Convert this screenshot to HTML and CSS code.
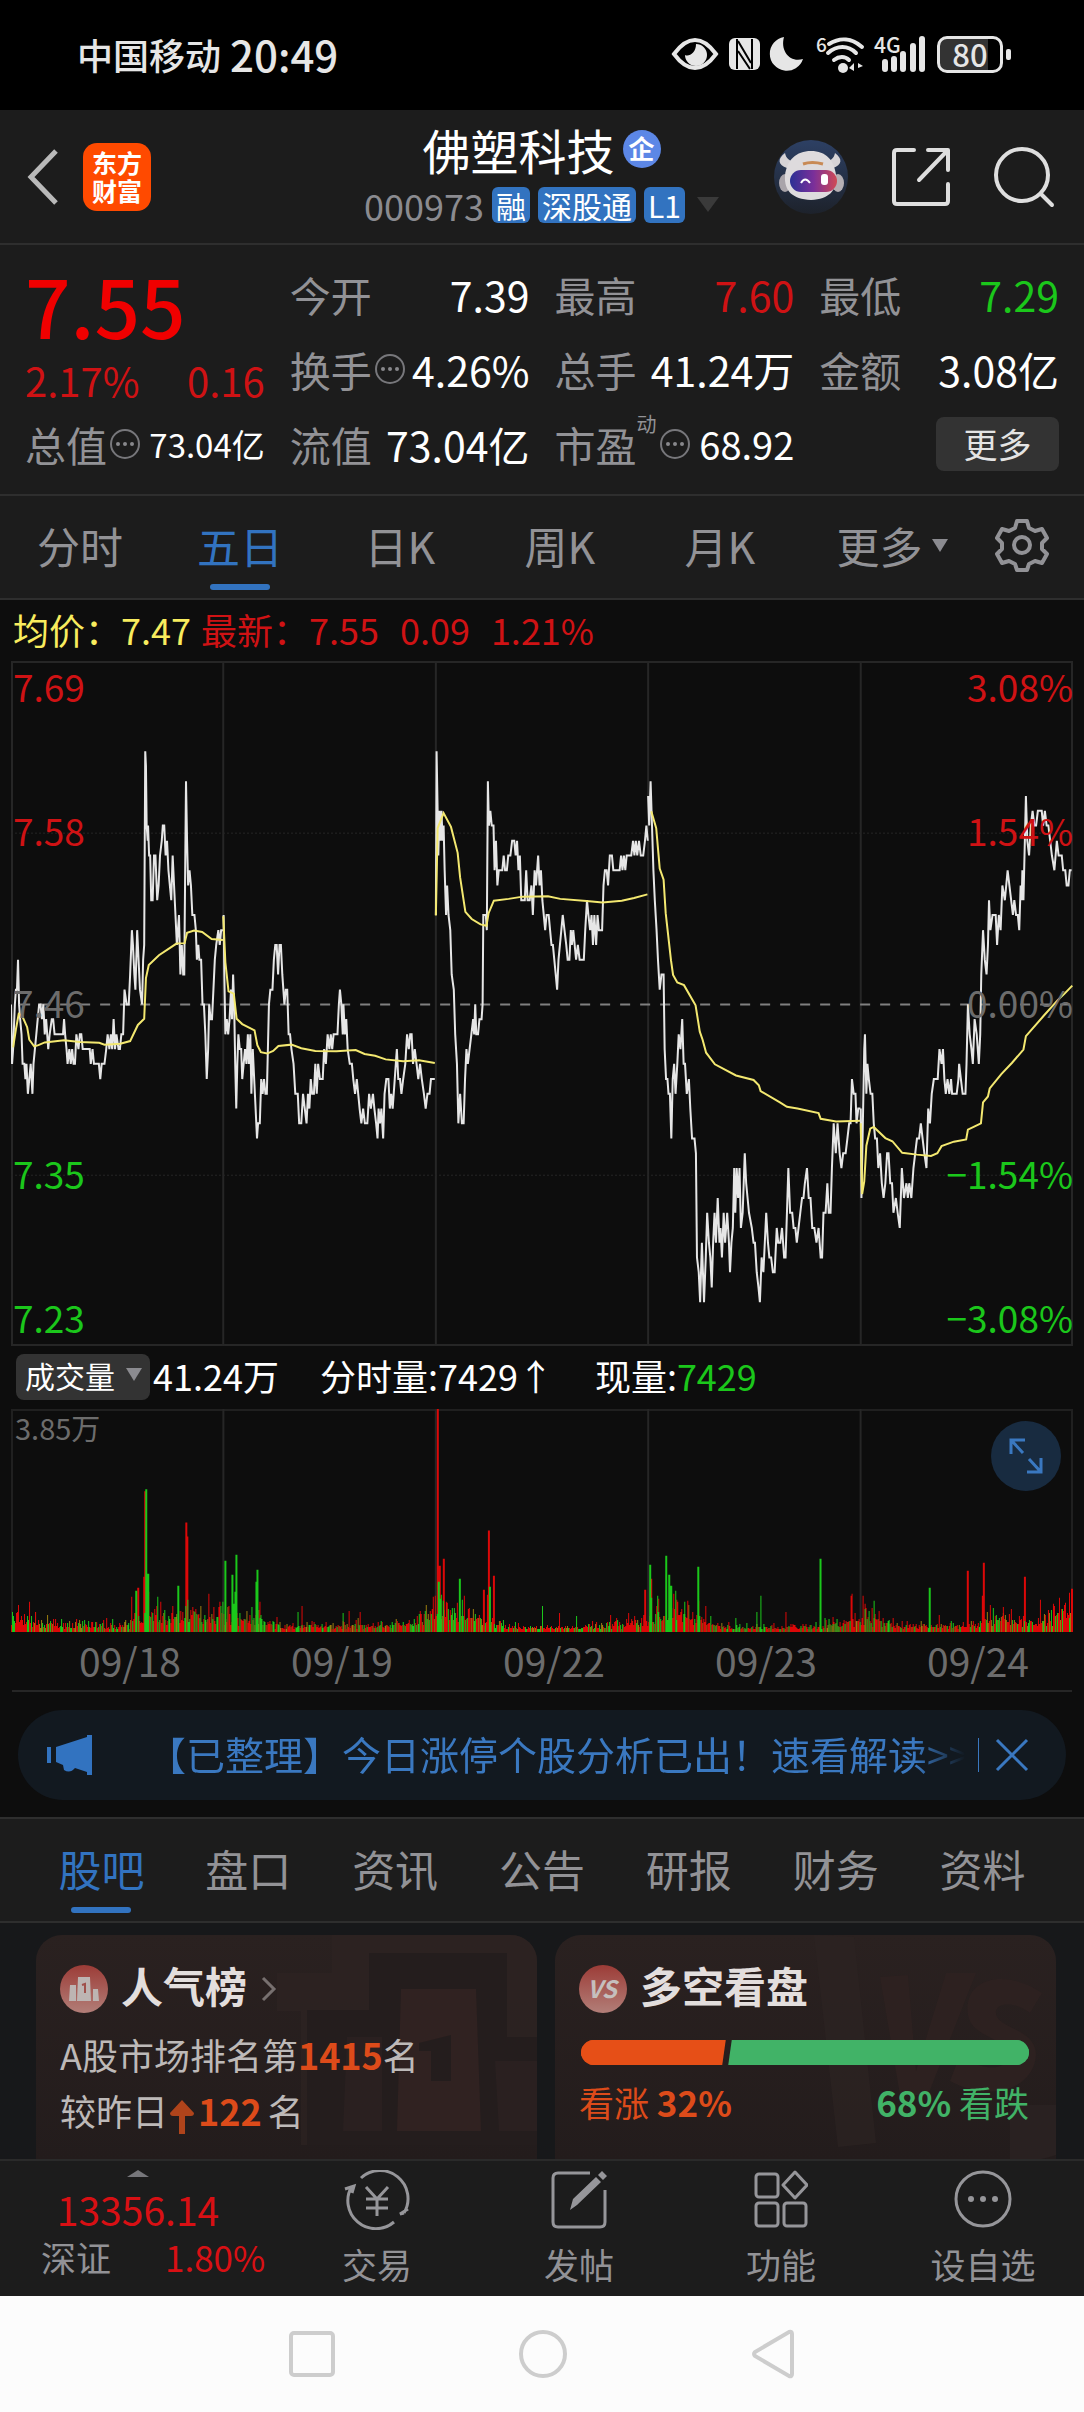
FILE: index.html
```html
<!DOCTYPE html>
<html lang="zh-CN">
<head>
<meta charset="utf-8">
<meta name="viewport" content="width=device-width, initial-scale=1">
<title>佛塑科技 000973</title>
<link rel="stylesheet" href="styles.css">
</head>
<body>
<div class="status-bar">
  <div class="carrier"><span>中国移动</span><span class="clock">20:49</span></div>
  <div class="status-icons">
    <svg width="46" height="34" viewBox="0 0 46 34"><path d="M2 17C10 6 17 3 23 3s13 3 21 14C36 28 29 31 23 31S10 28 2 17Z" fill="none" stroke="#e6e6e6" stroke-width="4"/><path d="M24 7a11 11 0 1 1-11 11c4 2 11-2 11-11Z" fill="#e6e6e6"/></svg>
    <svg width="31" height="34" viewBox="0 0 31 34"><rect y="1" width="31" height="32" rx="6" fill="#e6e6e6"/><path d="M8 2v30M23 2v30M9 4l13 22M9 14l12 18" stroke="#000" stroke-width="2"/></svg>
    <svg width="33" height="34" viewBox="0 0 33 34"><path d="M13 0a17 17 0 1 0 19 22C19 26 9 14 13 0Z" fill="#e6e6e6"/></svg>
    <svg class="wifi" width="50" height="38" viewBox="0 0 50 38"><g fill="none" stroke="#e6e6e6" stroke-width="4" stroke-linecap="round"><path d="M14 9c11-7 23-6 33 3M13 18c9-8 20-8 28 0M19 25c5-4 11-4 15 0"/></g><circle cx="28" cy="33" r="5" fill="#e6e6e6"/><path d="M39 28v8l-5-3ZM43 28v8M43 28l5 3-5 2Z" fill="#e6e6e6"/><text x="1" y="17" font-size="19" fill="#e6e6e6">6</text></svg>
    <svg width="52" height="38" viewBox="0 0 52 38"><text x="0" y="18" font-size="21" fill="#e6e6e6">4G</text><path d="M11 27v7M20 24v10M29 19v15M39 11v23M48 4v30" stroke="#e6e6e6" stroke-width="6" stroke-linecap="round"/></svg>
    <div class="battery">80</div>
  </div>
</div>

<header class="header">
  <div class="header-left">
    <button class="icon-btn" aria-label="返回"><svg width="34" height="58" viewBox="0 0 34 58"><path d="M30 3 5 29l25 26" fill="none" stroke="#b9b9b9" stroke-width="5"/></svg></button>
    <a class="logo" href="#">东方<br>财富</a>
  </div>
  <div class="header-mid">
    <h1 class="stock-name">佛塑科技<span class="corp">企</span></h1>
    <div class="stock-code"><span>000973</span><span class="tag">融</span><span class="tag">深股通</span><span class="tag">L1</span><i class="caret"></i></div>
  </div>
  <div class="header-right">
    <button class="icon-btn" aria-label="助手"><svg width="76" height="76" viewBox="0 0 76 76">
      <defs><linearGradient id="sky" x2="0" y2="1"><stop stop-color="#2d4064"/><stop offset="1" stop-color="#1d222b"/></linearGradient><linearGradient id="visor"><stop stop-color="#2b3095"/><stop offset=".5" stop-color="#7a2f9a"/><stop offset="1" stop-color="#d04a55"/></linearGradient></defs>
      <circle cx="38" cy="38" r="37" fill="url(#sky)"/>
      <path d="M12 14c-8 6-7 12 2 15l8-6c-6-1-9-4-10-9ZM62 14c8 6 7 12-2 15l-8-6c6-1 9-4 10-9Z" fill="#d6d3d6"/>
      <ellipse cx="12" cy="44" rx="6" ry="9" fill="#a9a4aa"/><ellipse cx="65" cy="44" rx="6" ry="9" fill="#b6b0b4"/>
      <path d="M38 12c15 0 23 9 25 24 1 16-7 24-25 25-19-1-27-9-26-25C14 21 23 12 38 12Z" fill="#dedbdd"/>
      <rect x="17" y="31" width="47" height="22" rx="11" fill="url(#visor)"/>
      <path d="M30 25q9-3 20 0" fill="none" stroke="#c88a55" stroke-width="3"/><path d="M28 44q4-7 9 0" fill="none" stroke="#fff" stroke-width="2"/><rect x="48" y="35" width="7" height="11" rx="3" fill="#fff"/>
    </svg></button>
    <button class="icon-btn" aria-label="分享"><svg width="60" height="60" viewBox="0 0 60 60"><g fill="none" stroke="#dedede" stroke-width="4" stroke-linecap="round" stroke-linejoin="round"><path d="M23 3H6q-3 0-3 3v48q0 3 3 3h48q3 0 3-3V37"/><path d="M37 3h20v20M56 4 28 33"/></g></svg></button>
    <button class="icon-btn" aria-label="搜索"><svg width="62" height="62" viewBox="0 0 62 62"><g fill="none" stroke="#dedede" stroke-width="4" stroke-linecap="round"><circle cx="29" cy="29" r="26"/><path d="m48 48 11 11"/></g></svg></button>
  </div>
</header>

<section class="quote">
  <div class="price-box">
    <div class="price">7.55</div>
    <div class="change"><span>2.17%</span><span>0.16</span></div>
  </div>
  <div class="cell"><span>今开</span><b>7.39</b></div>
  <div class="cell"><span>最高</span><b class="up">7.60</b></div>
  <div class="cell"><span>最低</span><b class="down">7.29</b></div>
  <div class="cell"><span>换手</span><svg class="info" viewBox="0 0 32 32"><use href="#dots"/></svg><b>4.26%</b></div>
  <div class="cell"><span>总手</span><b>41.24万</b></div>
  <div class="cell"><span>金额</span><b>3.08亿</b></div>
  <div class="cell"><span>总值</span><svg class="info" viewBox="0 0 32 32"><use href="#dots"/></svg><b class="small">73.04亿</b></div>
  <div class="cell"><span>流值</span><b>73.04亿</b></div>
  <div class="cell"><span>市盈</span><sup>动</sup><svg class="info" viewBox="0 0 32 32"><use href="#dots"/></svg><b class="medium">68.92</b></div>
  <div class="cell"><button class="more-btn">更多</button></div>
</section>
<svg class="defs" width="0" height="0"><g id="dots"><circle cx="16" cy="16" r="14" fill="none" stroke="#77777b" stroke-width="2"/><circle cx="9" cy="16" r="2" fill="#88888c"/><circle cx="16" cy="16" r="2" fill="#88888c"/><circle cx="23" cy="16" r="2" fill="#88888c"/></g></svg>

<nav class="tabs period">
  <button>分时</button><button class="on">五日</button><button>日K</button><button>周K</button><button>月K</button><button class="more-tab">更多<i class="caret"></i></button>
  <button aria-label="设置"><svg width="54" height="54" viewBox="0 0 54 54"><g fill="none" stroke="#929296" stroke-width="4" stroke-linejoin="round"><path d="M22 3h10l2 7 6 3 7-2 5 9-5 5v6l5 5-5 9-7-2-6 3-2 6H22l-2-6-6-3-7 2-5-9 5-5v-6l-5-5 5-9 7 2 6-3Z"/><circle cx="27" cy="27" r="8"/></g></svg></button>
</nav>

<main class="charts">
  <div class="legend"><span class="avg">均价：</span><span class="avg val">7.47</span><span>最新：</span><span class="val">7.55</span><span class="val">0.09</span><span>1.21%</span></div>
  <div class="price-chart">
    <svg class="plot" viewBox="34 26 3022 1532" preserveAspectRatio="none">
      <path class="grid" d="M638 26V1558M1243 26V1558M1847 26V1558M2452 26V1558"/>
      <path class="grid dot" d="M34 411H3056M34 1176H3056"/>
      <path class="zero" d="M60 794H3056"/>
      <g id="price-lines"></g>
    </svg>
    <span class="lab l p1 up">7.69</span><span class="lab l p2 up">7.58</span><span class="lab l p3">7.46</span><span class="lab l p4 down">7.35</span><span class="lab l p5 down">7.23</span>
    <span class="lab r p1 up">3.08%</span><span class="lab r p2 up">1.54%</span><span class="lab r p3">0.00%</span><span class="lab r p4 down">−1.54%</span><span class="lab r p5 down">−3.08%</span>
  </div>
  <div class="vol-head"><button class="vol-btn">成交量<i class="caret"></i></button><span>41.24万</span><span class="vol-min">分时量:7429↑</span><span>现量:<em class="down">7429</em></span></div>
  <div class="vol-chart">
    <svg class="plot" viewBox="0 0 1060 222" preserveAspectRatio="none">
      <path class="grid" d="M212 0V222M424 0V222M636 0V222M848 0V222"/>
      <g id="vol-bars"></g>
    </svg>
    <span class="vol-max">3.85万</span>
    <button class="expand" aria-label="全屏"><svg width="34" height="36" viewBox="0 0 34 36"><path d="M2 16V2h14M3 3l11 12M32 20v14H18M31 33 20 21" fill="none" stroke="#3a78c0" stroke-width="3"/></svg></button>
  </div>
  <div class="dates"><span>09/18</span><span>09/19</span><span>09/22</span><span>09/23</span><span>09/24</span></div>
  <div class="banner">
    <svg width="46" height="40" viewBox="0 0 46 40"><path d="M0 12h4v16H0ZM9 12 40 2V0h5v40h-5v-3l-12-4q-5 6-11 2l-1-5-7-3Z" fill="#3273c0"/></svg>
    <a class="banner-text" href="#">【已整理】今日涨停个股分析已出！速看解读&gt;&gt;</a>
    <button class="close" aria-label="关闭"><svg width="34" height="34" viewBox="0 0 34 34"><path d="m2 2 30 30M32 2 2 32" stroke="#3a78c0" stroke-width="3"/></svg></button>
  </div>
</main>

<nav class="tabs topic">
  <button class="on">股吧</button><button>盘口</button><button>资讯</button><button>公告</button><button>研报</button><button>财务</button><button>资料</button>
</nav>

<section class="cards">
  <article class="card">
    <svg class="mark" width="260" height="210" viewBox="0 0 260 210"><path d="M55 0h205v210H24V76H0V38h55Z" fill="#2d2422" opacity=".7"/><path d="M92 18h138v84h30v108H30V75h62Z" fill="#241d1d"/><path d="M124 54h75l5 142h-84Z" fill="#302221"/><path d="M70 102h35v94H66Z" fill="#2a2020"/><path d="M218 126h42v70h-38Z" fill="#2a2020"/><path d="m142 108 32-8v46h-20v-30h-12Z" fill="#241d1d"/></svg>
    <h2><svg width="48" height="48" viewBox="0 0 48 48"><defs><linearGradient id="red" x2="0" y2="1"><stop stop-color="#9c3c37"/><stop offset="1" stop-color="#b27e78"/></linearGradient></defs><circle cx="24" cy="24" r="24" fill="url(#red)"/><path d="M10 20h6v16H9ZM18 12h12l1 24H17ZM33 24h5l1 12h-6Z" fill="#bdb5b3"/><path d="m22 20 3-1v9" fill="none" stroke="#a0504b" stroke-width="2"/></svg><span>人气榜</span><svg class="chev" width="16" height="26" viewBox="0 0 16 26"><path d="m2 2 11 11L2 24" fill="none" stroke="#77706f" stroke-width="3"/></svg></h2>
    <p>A股市场排名第<b>1415</b>名</p>
    <p>较昨日<svg class="arrow" width="24" height="34" viewBox="0 0 24 34"><path d="M12 0 24 13q0 3-3 3h-6v18H9V16H3q-3 0-3-3Z" fill="#b0441b"/></svg><b class="gain">122</b>名</p>
  </article>
  <article class="card">
    <svg class="mark" width="242" height="226" viewBox="0 0 242 226"><path d="m0 0 40 2 22 206-38 4Z" fill="#2c2322" opacity=".7"/><path d="m66 42 28-2 8 96 30-98h30L114 160H86Z" fill="#2d2120"/><path d="M228 58c-38-26-80-14-74 22 4 24 42 22 40 42-2 16-32 12-48-2l-10 26c40 22 84 8 86-26 0-28-42-26-40-44 2-10 22-8 34 2Z" fill="#2d2120"/><path d="M196 170h46v50q-22 8-46 4Z" fill="#292121"/></svg>
    <h2><svg width="48" height="48" viewBox="0 0 48 48"><circle cx="24" cy="24" r="24" fill="url(#red)"/><text x="23" y="33" text-anchor="middle" font-size="24" font-weight="700" font-style="italic" fill="#c5bfbd">VS</text></svg><span>多空看盘</span></h2>
    <div class="ratio"><i class="bull" style="width:32%"></i><i class="bear"></i></div>
    <div class="ratio-text"><span>看涨 <b>32%</b></span><span class="fall"><b>68%</b> 看跌</span></div>
  </article>
</section>

<footer class="toolbar">
  <a class="index" href="#"><i class="caret"></i><strong>13356.14</strong><span><em>深证</em>1.80%</span></a>
  <a href="#"><svg width="66" height="60" viewBox="0 0 66 60"><g fill="none" stroke="#96969a" stroke-width="3"><path d="M17 8a28 28 0 0 1 43 35M60 43l-4 1 8-5M50 52A28 28 0 0 1 8 16M1 19l9-3-2 7"/><path d="m22 17 11 12 11-12M33 29v17M22 29h22M22 38h22"/></g></svg>交易</a>
  <a href="#"><svg width="58" height="60" viewBox="0 0 58 60"><g fill="none" stroke="#96969a" stroke-width="3"><path d="M40 3H8Q3 3 3 8v44q0 5 5 5h42q5 0 5-5V20"/></g><path d="m20 40 3-11L46 7l5 5-24 23ZM48 5l4-4 5 5-4 4Z" fill="#96969a"/></svg>发帖</a>
  <a href="#"><svg width="54" height="58" viewBox="0 0 54 58"><g fill="none" stroke="#96969a" stroke-width="3"><rect x="2" y="4" width="22" height="23" rx="3"/><rect x="2" y="33" width="22" height="23" rx="3"/><rect x="30" y="33" width="22" height="23" rx="3"/><path d="m41 2 12 13-12 13-12-13Z" stroke-linejoin="round"/></g></svg>功能</a>
  <a href="#"><svg width="58" height="58" viewBox="0 0 58 58"><circle cx="29" cy="29" r="27" fill="none" stroke="#96969a" stroke-width="3"/><g fill="#96969a"><circle cx="17" cy="29" r="3"/><circle cx="29" cy="29" r="3"/><circle cx="41" cy="29" r="3"/></g></svg>设自选</a>
</footer>

<div class="sys-nav">
  <button aria-label="最近任务"><svg width="46" height="46" viewBox="0 0 46 46"><rect x="2" y="2" width="42" height="42" rx="3"/></svg></button>
  <button aria-label="主页"><svg width="50" height="50" viewBox="0 0 50 50"><circle cx="25" cy="25" r="22"/></svg></button>
  <button aria-label="后退"><svg width="44" height="50" viewBox="0 0 44 50"><path d="M38 3q3-1 3 2v40q0 3-3 2L4 27q-2-2 0-4Z"/></svg></button>
</div>
<script src="chart.js"></script>
</body>
</html>
```
FILE: styles.css
```css
* { box-sizing: border-box; }
body {
  margin: 0;
  min-height: 100vh;
  display: flex;
  flex-direction: column;
  background: #17181a;
  color: #fff;
  font-family: "Noto Sans CJK SC", "Noto Sans", sans-serif;
  font-size: 36px;
  line-height: 48px;
}
button { font: inherit; color: inherit; background: none; border: 0; padding: 0; }
a { color: inherit; text-decoration: none; }
svg { display: block; flex: none; }
h1, h2, p { margin: 0; }
em, i { font-style: normal; }
.up { color: #cf1214; }
.down { color: #1bc71b; }
.defs { position: absolute; }
.caret {
  display: inline-block;
  border: 8px solid transparent;
  border-top: 13px solid #8b8b90;
  border-bottom: 0;
}

.status-bar {
  height: 110px;
  padding: 0 81px 2px 77px;
  display: flex;
  align-items: center;
  justify-content: space-between;
  background: #000;
  color: #e6e6e6;
}
.carrier { display: flex; align-items: center; gap: 9px; font-weight: 500; }
.clock { font-size: 42px; }
.status-icons { display: flex; align-items: center; gap: 11px; font-weight: 500; }
.status-icons svg { overflow: visible; }
.wifi { margin-right: -2px; }
.battery {
  position: relative;
  width: 66px;
  height: 37px;
  border: 3px solid #e6e6e6;
  border-radius: 10px;
  background: linear-gradient(90deg, #333 80%, #000 80%);
  text-align: center;
  font-size: 31px;
  line-height: 29px;
}
.battery::after {
  content: "";
  position: absolute;
  right: -11px;
  top: 10px;
  width: 5px;
  height: 11px;
  border-radius: 2px;
  background: #e6e6e6;
}

.header {
  height: 135px;
  padding: 0 29px 0 26px;
  display: grid;
  grid-template-columns: 1fr auto 1fr;
  align-items: center;
  background: #1c1c1c;
  border-bottom: 2px solid #2e2e2e;
}
.icon-btn { display: block; }
.header-left { display: flex; align-items: center; gap: 23px; }
.logo {
  width: 68px;
  height: 68px;
  padding: 5px 0;
  border-radius: 14px;
  background: #ff4a00;
  text-align: center;
  font-size: 25px;
  font-weight: 700;
  line-height: 28px;
}
.stock-name { display: flex; align-items: center; justify-content: center; gap: 8px; font-size: 48px; line-height: 60px; font-weight: 400; }
.corp { width: 38px; height: 38px; border-radius: 50%; background: #5c87e6; font-size: 26px; line-height: 36px; font-weight: 700; text-align: center; }
.header-mid { padding-left: 2px; padding-bottom: 4px; }
.stock-code { display: flex; align-items: center; justify-content: center; gap: 8px; height: 52px; color: #8b8b90; }
.tag { padding: 0 4px; border-radius: 6px; background: #3273c0; color: #fff; font-size: 30px; line-height: 36px; }
.stock-code .caret { margin-left: 4px; border-width: 15px 11px 0; border-top-color: #3a3a3a; }
.header-right { display: flex; align-items: center; justify-content: flex-end; gap: 42px; }

.quote {
  padding: 11px 25px 13px;
  display: grid;
  grid-template-columns: repeat(4, minmax(0, 1fr));
  grid-auto-rows: 75px;
  column-gap: 25px;
  background: #1c1c1c;
  border-bottom: 2px solid #2e2e2e;
  font-size: 41px;
}
.price-box { grid-row: span 2; padding-top: 10px; }
.price { font-size: 80px; line-height: 76px; font-weight: 500; color: #f00000; }
.change { display: flex; justify-content: space-between; margin-top: 14px; font-size: 40px; color: #cf1214; }
.cell { display: flex; align-items: center; white-space: nowrap; }
.cell span { color: #929296; }
.cell b { margin-left: auto; font-weight: 400; }
.cell .small { font-size: 33px; }
.cell .medium { font-size: 38px; }
.cell sup { align-self: flex-start; font-size: 20px; line-height: 36px; color: #929296; }
.info { width: 32px; height: 32px; margin: 0 2px; }
.more-btn { width: 123px; height: 54px; margin-left: auto; border-radius: 8px; background: #333; color: #e4e4e4; font-size: 34px; line-height: 48px; }

.tabs {
  height: 104px;
  display: grid;
  background: #1c1c1c;
  border-bottom: 2px solid #2e2e2e;
  color: #929296;
  font-size: 43px;
}
.tabs button { position: relative; display: flex; align-items: center; justify-content: center; padding-bottom: 4px; }
.tabs .on { color: #3273c0; }
.tabs .on::after {
  content: "";
  position: absolute;
  bottom: 8px;
  left: calc(50% - 30px);
  width: 60px;
  height: 6px;
  border-radius: 3px;
  background: #3273c0;
}
.period { grid-template-columns: repeat(6, 160fr) 124fr; }
.tabs .more-tab { gap: 9px; padding-left: 24px; }
.topic { grid-template-columns: repeat(7, 1fr); padding: 0 28px; height: 106px; border-top: 2px solid #2e2e2e; }

.charts { background: #0d0d0d; }
.legend { height: 61px; padding: 0 13px 4px; display: flex; align-items: center; font-size: 36px; color: #cf1214; }
.legend .val { margin-right: 21px; }
.legend .avg { color: #f8ec5e; }
.legend .avg.val { margin-right: 10px; }
.price-chart, .vol-chart { position: relative; margin: 0 11px; }
.price-chart { height: 685px; box-shadow: inset 0 0 0 2px #262626; }
.vol-chart { height: 223px; box-shadow: inset 0 0 0 2px #202020; }
.plot { position: absolute; left: 0; top: 0; width: 100%; height: 100%; }
.plot path { fill: none; vector-effect: non-scaling-stroke; }
.plot .grid { stroke: #262626; stroke-width: 2; }
.plot .dot { stroke-width: 1; stroke-dasharray: 2 2; }
.plot .zero { stroke: #808080; stroke-width: 2; stroke-dasharray: 10 10; }
.plot .price-line { stroke: #e6e6e6; stroke-width: 2; }
.plot .avg-line { stroke: #f3e870; stroke-width: 2; }
.plot .bar-up { fill: #dc0808; }
.plot .bar-down { fill: #1bc71b; }
.plot .bar-mix { fill: #9a7d10; }
.lab { position: absolute; font-size: 37px; line-height: 48px; margin-top: -26px; }
.lab.l { left: 2px; }
.lab.r { right: 0; }
.p1 { top: 4%; }
.p2 { top: 25%; }
.p3 { top: 50%; color: #6c6c6c; }
.p4 { top: 75%; }
.p5 { top: 96%; }

.vol-head { height: 63px; padding: 0 16px 6px; display: flex; align-items: center; }
.vol-btn { display: flex; align-items: center; gap: 11px; height: 46px; margin: 4px 3px 0 0; padding: 0 8px 4px 9px; border-radius: 8px; background: #333; font-size: 30px; }
.vol-min { margin: 0 41px; }
.vol-max { position: absolute; left: 4px; top: -2px; font-size: 29px; line-height: 40px; color: #6c6c6c; }
.expand { position: absolute; right: 12px; top: 12px; width: 70px; height: 70px; border-radius: 50%; background: #182b40; display: grid; place-items: center; }
.dates { height: 58px; padding-left: 24px; display: grid; grid-template-columns: repeat(5, 1fr); text-align: center; font-size: 39px; line-height: 56px; color: #6c6c6c; }
.banner {
  position: relative;
  height: 90px;
  margin: 20px 18px 17px;
  padding: 0 37px 0 29px;
  display: flex;
  align-items: center;
  border-radius: 45px;
  background: #121920;
  color: #3a78c0;
  font-size: 39px;
}
.banner::before { content: ""; position: absolute; left: -6px; right: -6px; top: -20px; height: 2px; background: #262626; }
.banner-text {
  flex: 1;
  margin-left: 54px;
  padding-bottom: 4px;
  min-width: 0;
  overflow: hidden;
  white-space: nowrap;
  -webkit-mask-image: linear-gradient(90deg, #000 94%, transparent 100%);
  mask-image: linear-gradient(90deg, #000 94%, transparent 100%);
}
.close { margin-left: 13px; padding-left: 16px; border-left: 1px solid #3a78c0; }

.cards {
  flex: 1;
  padding: 12px 28px 0 36px;
  display: grid;
  grid-template-columns: 1fr 1fr;
  gap: 18px;
  overflow: hidden;
}
.card {
  position: relative;
  padding: 28px 27px 16px 24px;
  border-radius: 26px 26px 0 0;
  background: linear-gradient(#2a2120, #231c1c);
  color: #bdb9b8;
  overflow: hidden;
}
.mark { position: absolute; right: 0; top: 0; }
.card > :not(.mark) { position: relative; }
.card h2 { display: flex; align-items: center; gap: 13px; height: 52px; font-size: 42px; color: #e3dedd; }
.card h2 span { padding-bottom: 8px; }
.chev { margin-left: 1px; }
.card p { display: flex; align-items: center; height: 56px; }
.card h2 + p { margin-top: 11px; }
.card b { color: #dd4b1a; }
.arrow { margin: 14px 4px 0 2px; }
.card .gain { margin-right: 6px; }
.ratio { display: flex; gap: 6px; height: 25px; margin: 25px 0 0 2px; border-radius: 13px; overflow: hidden; }
.ratio i { transform: skewX(-8deg); }
.bull { background: #e64f17; box-shadow: -20px 0 #e64f17; }
.bear { flex: 1; background: #41b367; box-shadow: 20px 0 #41b367; }
.ratio-text { display: flex; justify-content: space-between; margin-top: 13px; font-size: 35px; color: #dd4b1a; }
.fall, .card .fall b { color: #41b367; }

.toolbar {
  height: 137px;
  display: grid;
  grid-template-columns: 276fr repeat(4, 202fr);
  background: #1c1c1c;
  border-top: 2px solid #2a2a2a;
  color: #929296;
  font-size: 35px;
}
.toolbar a { display: flex; flex-direction: column; align-items: center; justify-content: space-between; padding: 9px 0 8px; }
.toolbar .index { color: #d81014; justify-content: flex-start; }
.index .caret { border: solid transparent; border-width: 0 11px 7px; border-bottom-color: #77777b; margin-bottom: 8px; }
.index strong { font-size: 39px; font-weight: 400; }
.index span { display: flex; width: 100%; gap: 54px; padding-left: 41px; }
.index em { color: #929296; }

.sys-nav { height: 116px; display: flex; align-items: center; justify-content: center; gap: 183px; background: #fcfcfc; }
.sys-nav svg { fill: none; stroke: #cdcdcd; stroke-width: 4; }
```
FILE: chart.js
```js
// Each session: x offset, price as "x,ticks from previous close", average as "x,y".
const sessions = [
  [0, "34,0 37,-4 40,-3 45,0 48,1 51,1 54,3 57,0 60,-1 64,-2 67,-4 72,-4 75,-5 78,-4 82,-6 86,-5 90,-4 95,-6 98,-4 102,-3 106,-2 110,-1 114,0 118,0 122,-1 126,0 130,-2 134,-1 140,-3 144,-2 150,-1 154,-1 158,-2 182,-2 185,-1 188,-2 192,-3 195,-4 200,-3 204,-4 208,-3 212,-4 216,-4 220,-2 226,-3 230,-2 234,-2 238,-3 258,-3 261,-4 266,-3 270,-4 284,-4 288,-5 292,-4 300,-4 305,-3 309,-2 314,-3 318,-2 322,-3 326,-1 330,-3 334,-2 340,-3 344,-3 348,-2 353,-2 357,1 363,0 369,0 373,2 378,5 381,4 385,2 388,1 393,5 397,3 401,1 407,0 410,3 413,4 416,17 418,16 420,12 423,11 424,12 427,10 430,10 433,7 437,7 441,10 445,10 450,7 454,8 458,10 463,11 466,12 470,12 474,10 478,11 482,9 486,8 490,7 494,10 498,8 502,6 506,4 509,5 512,6 516,2 520,4 524,2 527,2 530,10 532,15 535,11 538,8 542,9 546,8 550,6 556,6 560,5 563,3 567,4 570,3 575,3 579,0 583,0 587,-2 591,-5 595,-3 598,0 602,-1 606,-1 610,1 614,3 618,4 624,5 628,4 632,5 637,5",
    "40,890 48,850 56,815 66,820 80,845 86,873 100,888 112,885 130,879 185,874 230,878 285,880 300,884 345,882 373,876 395,840 413,826 418,735 426,706 455,684 505,658 528,657 535,634 555,629 578,632 605,648 637,650"],
  [0, "639,6 641,2 644,-2 648,-1 652,-2 656,-1 660,1 663,-1 666,2 669,0 672,-4 675,-7 678,-4 681,-2 685,-3 689,-3 692,-5 696,-4 700,-3 704,-4 708,-2 711,-4 715,-2 718,-6 722,-3 726,-5 730,-7 734,-9 737,-8 742,-8 746,-5 750,-6 754,-5 758,-6 762,-6 765,-3 768,0 772,1 778,1 782,3 786,4 790,4 794,2 798,4 802,4 806,2 812,0 816,1 820,1 824,-2 828,-2 832,-3 838,-4 843,-6 850,-6 854,-8 860,-8 865,-6 870,-7 875,-8 879,-6 883,-7 887,-5 891,-6 896,-6 900,-4 904,-6 908,-4 913,-5 917,-5 921,-5 925,-3 930,-4 935,-2 940,-3 944,-2 948,-3 952,-2 963,-2 967,0 970,1 974,0 978,-2 980,0 984,-2 988,-1 992,-3 998,-4 1004,-4 1008,-5 1013,-6 1018,-5 1022,-6 1026,-7 1031,-8 1036,-7 1041,-8 1048,-8 1053,-6 1058,-7 1064,-6 1068,-7 1073,-8 1077,-9 1080,-7 1084,-8 1088,-7 1093,-9 1097,-6 1102,-5 1108,-5 1112,-7 1116,-6 1120,-7 1126,-5 1129,-4 1132,-3 1136,-5 1141,-5 1145,-6 1150,-5 1156,-4 1161,-2 1166,-3 1170,-2 1174,-2 1178,-4 1183,-3 1188,-4 1193,-5 1198,-4 1203,-5 1209,-6 1214,-7 1219,-6 1225,-6 1229,-5 1240,-5",
    "638,597 644,700 653,765 668,770 676,826 692,838 727,852 735,885 745,901 763,904 780,898 795,887 832,884 860,892 900,898 960,899 1015,896 1040,905 1070,909 1100,917 1150,921 1195,919 1240,925"],
  [0, "1243,6 1245,17 1248,13 1250,10 1253,13 1256,11 1259,13 1262,11 1265,12 1268,9 1272,6 1275,8 1279,6 1284,5 1288,2 1294,1 1298,-2 1303,-4 1307,-8 1312,-6 1317,-8 1322,-8 1326,-5 1330,-3 1334,-4 1339,-3 1344,-2 1349,-1 1352,-2 1355,0 1358,-2 1363,-2 1367,-1 1373,-1 1376,0 1378,6 1385,6 1388,5 1391,15 1394,12 1398,13 1402,12 1407,12 1410,9 1414,11 1418,8 1422,9 1432,9 1436,10 1440,9 1445,9 1449,10 1455,10 1460,11 1466,11 1470,10 1474,11 1478,9 1482,10 1486,7 1496,7 1500,9 1504,7 1510,7 1515,8 1519,6 1524,9 1528,8 1534,10 1538,8 1542,9 1546,7 1550,6 1554,5 1558,6 1564,6 1568,5 1572,4 1576,4 1580,3 1584,2 1588,1 1592,3 1596,4 1600,5 1604,6 1609,5 1614,4 1618,3 1623,3 1627,5 1630,4 1634,5 1638,4 1642,3 1647,4 1652,3 1664,3 1668,5 1673,7 1677,6 1682,5 1686,6 1690,4 1694,6 1699,4 1703,6 1707,5 1716,5 1720,8 1724,9 1729,9 1733,8 1738,10 1744,10 1748,9 1766,9 1770,10 1774,9 1778,10 1782,9 1786,10 1799,10 1804,11 1808,10 1812,11 1816,10 1821,11 1826,10 1833,10 1838,11 1842,12 1846,11",
    "1243,595 1248,400 1265,366 1286,397 1305,455 1312,510 1327,587 1345,603 1370,615 1387,618 1393,590 1408,562 1450,558 1490,553 1562,552 1597,558 1672,563 1717,566 1772,562 1807,556 1845,548"],
  [1522, "325,14 328,12 332,15 336,12 340,9 344,7 349,5 353,3 358,1 363,2 369,2 372,-3 376,-5 380,-5 383,-6 387,-6 391,-9 395,-5 399,-4 403,-6 408,-4 412,-2 417,-3 422,-1 426,-4 430,-4 435,-6 441,-5 445,-7 450,-9 457,-9 461,-10 464,-17 469,-18 473,-20 478,-16 484,-20 489,-17 493,-14 498,-16 502,-17 506,-19 510,-16 514,-14 518,-16 523,-13 528,-16 531,-15 535,-17 540,-14 544,-16 550,-14 555,-16 558,-18 562,-16 566,-15 570,-11 573,-14 577,-11 581,-13 585,-11 589,-15 594,-14 600,-10 604,-12 608,-13 612,-14 620,-15 625,-16 629,-16 634,-18 639,-19 643,-20 648,-17 653,-18 657,-16 661,-14 666,-16 670,-17 675,-17 680,-18 685,-18 691,-15 695,-16 701,-16 706,-15 712,-17 716,-17 720,-14 724,-11 729,-14 735,-14 739,-15 744,-15 748,-16 753,-15 758,-14 763,-13 767,-13 771,-12 777,-11 782,-13 787,-13 792,-15 798,-15 804,-16 810,-15 816,-17 820,-17 824,-14 830,-14 835,-12 839,-14 844,-14 848,-11 853,-8 859,-10 864,-8 870,-10 875,-11 880,-10 887,-10 892,-9 897,-8 901,-8 905,-5 910,-6 915,-6 918,-8 923,-7 929,-7",
    "334,362 348,400 358,490 369,515 375,590 390,695 396,728 408,745 427,751 460,796 472,855 480,873 490,902 515,928 575,953 625,963 640,975 645,988 700,1013 720,1023 750,1027 810,1037 816,1050 860,1056 928,1054"],
  [1522, "930,-7 932,-13 936,-8 940,-3 942,-2 946,-6 949,-4 953,-5 958,-6 963,-6 967,-8 971,-9 976,-9 980,-11 985,-10 990,-12 995,-13 1000,-12 1005,-10 1009,-10 1014,-12 1019,-12 1023,-14 1030,-13 1035,-14 1041,-15 1047,-11 1053,-13 1060,-12 1064,-13 1068,-12 1074,-13 1080,-11 1085,-10 1090,-9 1096,-9 1101,-8 1106,-9 1111,-10 1117,-11 1122,-7 1127,-8 1132,-6 1138,-5 1149,-5 1154,-3 1160,-4 1164,-3 1168,-5 1172,-6 1177,-5 1182,-6 1187,-5 1190,-6 1203,-6 1208,-5 1210,-4 1215,-5 1220,-6 1228,-6 1231,-4 1235,0 1240,-2 1245,-3 1249,-4 1254,-1 1260,-2 1266,-4 1270,-2 1273,2 1278,5 1283,3 1288,2 1292,4 1295,7 1299,5 1305,6 1314,6 1318,4 1323,6 1328,5 1333,8 1340,7 1344,8 1348,9 1353,8 1358,7 1363,6 1367,7 1372,6 1377,6 1381,5 1385,8 1388,7 1390,9 1393,7 1396,10 1400,14 1404,11 1409,10 1414,12 1419,13 1424,12 1429,12 1434,13 1445,13 1449,12 1454,13 1459,12 1464,12 1469,11 1474,10 1481,9 1488,11 1493,10 1502,10 1506,9 1512,9 1516,8 1521,8 1525,9 1530,9",
    "930,1060 934,1218 940,1190 946,1110 957,1072 967,1068 1000,1093 1020,1100 1048,1126 1090,1130 1130,1133 1148,1127 1160,1111 1195,1101 1230,1096 1235,1074 1272,1060 1278,1013 1292,1000 1297,982 1330,950 1360,925 1393,895 1400,865 1450,820 1490,785 1510,770 1532,752"]
];

const toPath = (text, offset, toY) => "M" + text.split(" ").map(pair => {
  const [x, v] = pair.split(",").map(Number);
  return (x + offset) + " " + Math.round(toY(v));
}).join("L");

document.getElementById("price-lines").innerHTML = sessions.map(([dx, price, avg]) =>
  `<path class="price-line" d="${toPath(price, dx, n => 794 - 33.3 * n)}"/>` +
  `<path class="avg-line" d="${toPath(avg, dx, y => y)}"/>`).join("");

// Volume peaks: x, height, u(p) or d(own).
const peaks = "1,20,d 7,27,u 18,30,u 24,20,u 120,35,u 124,41,d 126,44,u 132,55,u 133,140,u 134,142,d 136,58,d 137,40,u 146,35,d 149,30,u 166,46,d 174,109,u 175,95,u 176,32,d 197,38,u 208,30,u 213,71,d 220,57,d 223,40,d 224,77,d 244,50,d 245,62,d 248,30,u 286,20,d 290,26,u 331,19,d 337,21,u 348,20,u 421,35,u 423,36,u 425,222,u 426,50,d 427,66,u 429,37,d 431,73,u 440,24,d 447,53,d 450,32,d 452,36,u 471,42,u 475,37,u 476,101,u 477,45,d 481,56,u 530,26,d 547,19,u 564,16,d 598,17,u 616,19,u 632,42,u 637,67,d 638,53,u 639,34,d 645,36,d 646,33,u 653,76,d 656,57,d 658,46,d 661,38,u 664,32,u 672,30,d 675,31,u 685,65,d 686,31,u 693,26,u 723,14,d 744,20,d 748,36,d 773,20,u 807,73,d 820,15,u 838,36,u 839,38,u 850,36,u 852,28,u 861,31,d 916,44,d 926,17,u 954,61,u 969,36,u 970,69,u 977,27,u 990,25,u 998,23,u 1011,55,u 1012,32,u 1027,32,u 1038,22,d 1040,28,u 1046,34,u 1049,23,d 1056,39,u 1058,43,u";
const level = [[0, 24], [30, 18], [50, 13], [118, 13], [122, 27], [212, 34], [250, 25], [270, 10], [400, 15], [425, 38], [455, 30], [485, 15], [515, 8], [590, 10], [630, 22], [665, 36], [700, 16], [720, 8], [800, 11], [835, 19], [860, 24], [890, 12], [960, 12], [975, 25], [1020, 22], [1060, 36]];
const levelAt = x => {
  const i = Math.max(1, level.findIndex(p => p[0] >= x));
  const [a, b] = [level[i - 1], level[i]];
  return a[1] + (b[1] - a[1]) * (x - a[0]) / (b[0] - a[0]);
};
let seed = 7;
const rand = () => (seed = (seed * 16807) % 2147483647) / 2147483647;
const bars = { "bar-mix": "", "bar-up": "", "bar-down": "" };
const bar = (kind, x, h, w) => { bars[kind] += `M${x} 222v${-h}h${w}v${h}z`; };
for (let x = 0; x < 1060; x++) {
  const h = Math.max(3, Math.round(levelAt(x) * (0.2 + 0.8 * rand() * rand() + 0.25 * rand())));
  const k = rand();
  bar(k < 0.6 ? "bar-up" : k < 0.85 ? "bar-down" : "bar-mix", x, h, 1);
}
peaks.split(" ").forEach(p => {
  const [x, h, k] = p.split(",");
  bar(k === "u" ? "bar-up" : "bar-down", +x, +h, +h > 40 ? 2 : 1);
});
document.getElementById("vol-bars").innerHTML =
  Object.entries(bars).map(([k, d]) => `<path class="${k}" d="${d}"/>`).join("");
```
